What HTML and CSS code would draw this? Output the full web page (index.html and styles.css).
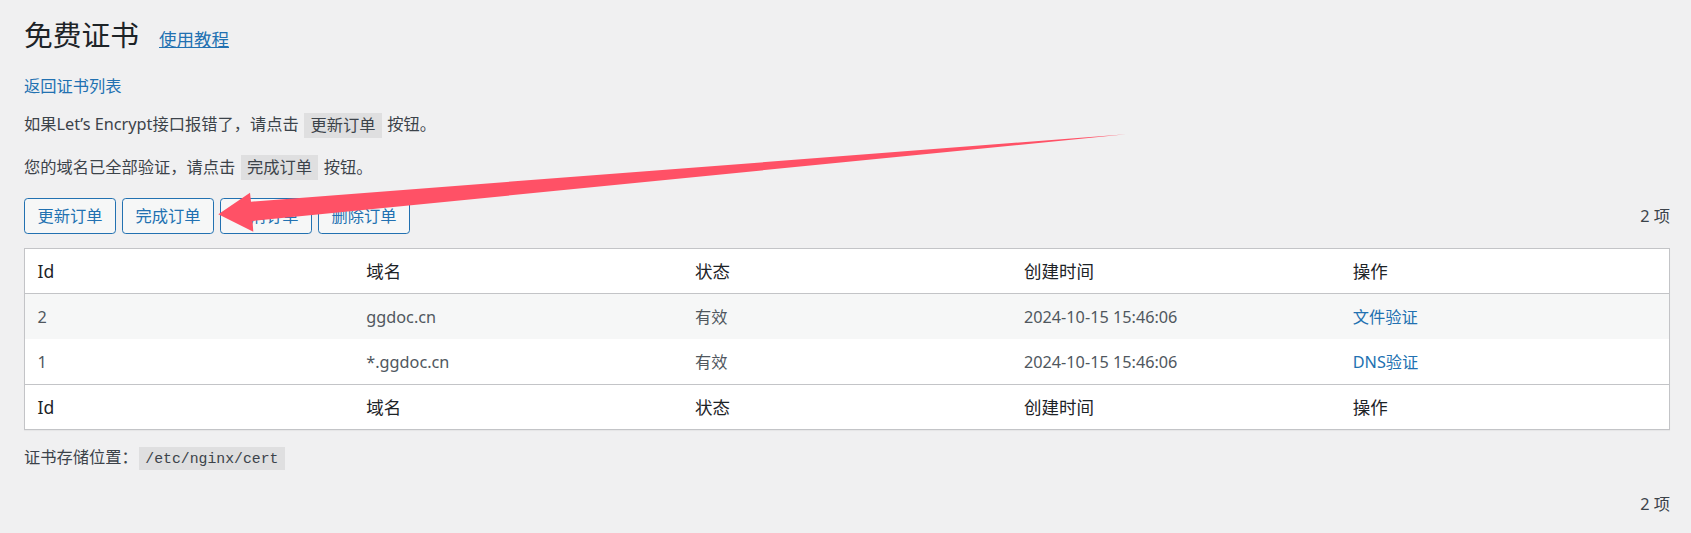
FILE: index.html
```html
<!DOCTYPE html>
<html lang="zh-CN">
<head>
  <meta charset="UTF-8" />
  <meta name="viewport" content="width=device-width, initial-scale=1" />
  <title>免费证书</title>
  <link rel="stylesheet" href="styles.css">
</head>
<body>

  <div class="wrap">
    <div class="page-head">
      <h1>免费证书</h1>
      <a class="title-link" href="#">使用教程</a>
    </div>

    <p class="back"><a href="#">返回证书列表</a></p>

    <p>如果Let’s Encrypt接口报错了，请点击 <code>更新订单</code> 按钮。</p>
    <p>您的域名已全部验证，请点击 <code>完成订单</code> 按钮。</p>

    <div class="tablenav">
      <div class="actions">
        <button type="button">更新订单</button>
        <button type="button">完成订单</button>
        <button type="button">取消订单</button>
        <button type="button">删除订单</button>
      </div>
      <span class="count">2 项</span>
    </div>

    <table class="list">
      <thead>
        <tr>
          <th>Id</th>
          <th>域名</th>
          <th>状态</th>
          <th>创建时间</th>
          <th>操作</th>
        </tr>
      </thead>
      <tbody>
        <tr class="alt">
          <td>2</td>
          <td>ggdoc.cn</td>
          <td>有效</td>
          <td>2024-10-15 15:46:06</td>
          <td><a href="#">文件验证</a></td>
        </tr>
        <tr>
          <td>1</td>
          <td>*.ggdoc.cn</td>
          <td>有效</td>
          <td>2024-10-15 15:46:06</td>
          <td><a href="#">DNS验证</a></td>
        </tr>
      </tbody>
      <tfoot>
        <tr>
          <th>Id</th>
          <th>域名</th>
          <th>状态</th>
          <th>创建时间</th>
          <th>操作</th>
        </tr>
      </tfoot>
    </table>

    <p class="path">证书存储位置：<code class="mono">/etc/nginx/cert</code></p>

    <div class="tablenav bottom">
      <span class="count">2 项</span>
    </div>
  </div>

  <!-- annotation arrow drawn over the screenshot -->
  <svg class="arrow" width="1691" height="533" viewBox="0 0 1691 533">
    <polygon fill="#ff5166" points="218.3,214.3 250,192.7 251,201.7 1126,134.2 252.5,221 253.3,231.7" />
  </svg>

</body>
</html>
```

FILE: styles.css
```css
body {
  margin: 0;
  background-color: #f0f0f1;
  color: #3c434a;
  font-family: "Noto Sans", "Noto Sans CJK SC", sans-serif;
  font-size: 16.25px;
  line-height: 24.4px;
  position: relative;
}

a {
  color: #2271b1;
  text-decoration: none;
}

.wrap {
  padding: 15px 21px 0 24px;
}

.page-head {
  display: flex;
  align-items: baseline;
}

h1 {
  margin: 0;
  font-size: 28.75px;
  line-height: 40px;
  font-weight: 400;
  color: #1d2327;
}

.title-link {
  margin-left: 20px;
  font-size: 17.5px;
  text-decoration: underline;
}

p {
  margin: 0 0 16px 0;
}

.back {
  margin-top: 19px;
  margin-bottom: 14px;
}

code {
  background: rgba(0, 0, 0, 0.07);
  padding: 3.75px 6.25px 2.5px;
  margin: 0 1.25px;
  font-family: "Liberation Mono", "Noto Sans CJK SC", monospace;
  font-size: 16.25px;
}

code.mono {
  font-size: 14.8px;
  padding: 4px 6.25px 3px;
}

.tablenav {
  display: flex;
  justify-content: space-between;
  align-items: center;
  margin-top: 17px;
  height: 36px;
}

.tablenav.bottom {
  justify-content: flex-end;
  margin-top: 15px;
}

.actions {
  display: flex;
  gap: 6px;
}

button {
  height: 36px;
  padding: 0 12.5px;
  border: 1px solid #2271b1;
  border-radius: 3.75px;
  background: #f6f7f7;
  color: #2271b1;
  font-family: inherit;
  font-size: 16.25px;
  line-height: 34px;
  cursor: pointer;
}

.count {
  color: #3c434a;
}

.list {
  width: 100%;
  margin-top: 14px;
  table-layout: fixed;
  border-collapse: separate;
  border-spacing: 0;
  background: #fff;
  border: 1px solid #c3c4c7;
  box-shadow: 0 1px 1px rgba(0, 0, 0, 0.04);
}

.list th {
  height: 44px;
  padding: 0 12.5px;
  text-align: left;
  font-weight: 400;
  font-size: 17.5px;
  color: #1d2327;
}

.list thead th {
  border-bottom: 1px solid #c3c4c7;
}

.list tfoot th {
  border-top: 1px solid #c3c4c7;
}

.list td {
  height: 45px;
  padding: 0 12.5px;
  color: #50575e;
}

.list tr.alt td {
  background: #f6f7f7;
}

.path {
  margin-top: 15px;
  margin-bottom: 0;
}

.arrow {
  position: absolute;
  top: 0;
  left: 0;
  pointer-events: none;
}
```
